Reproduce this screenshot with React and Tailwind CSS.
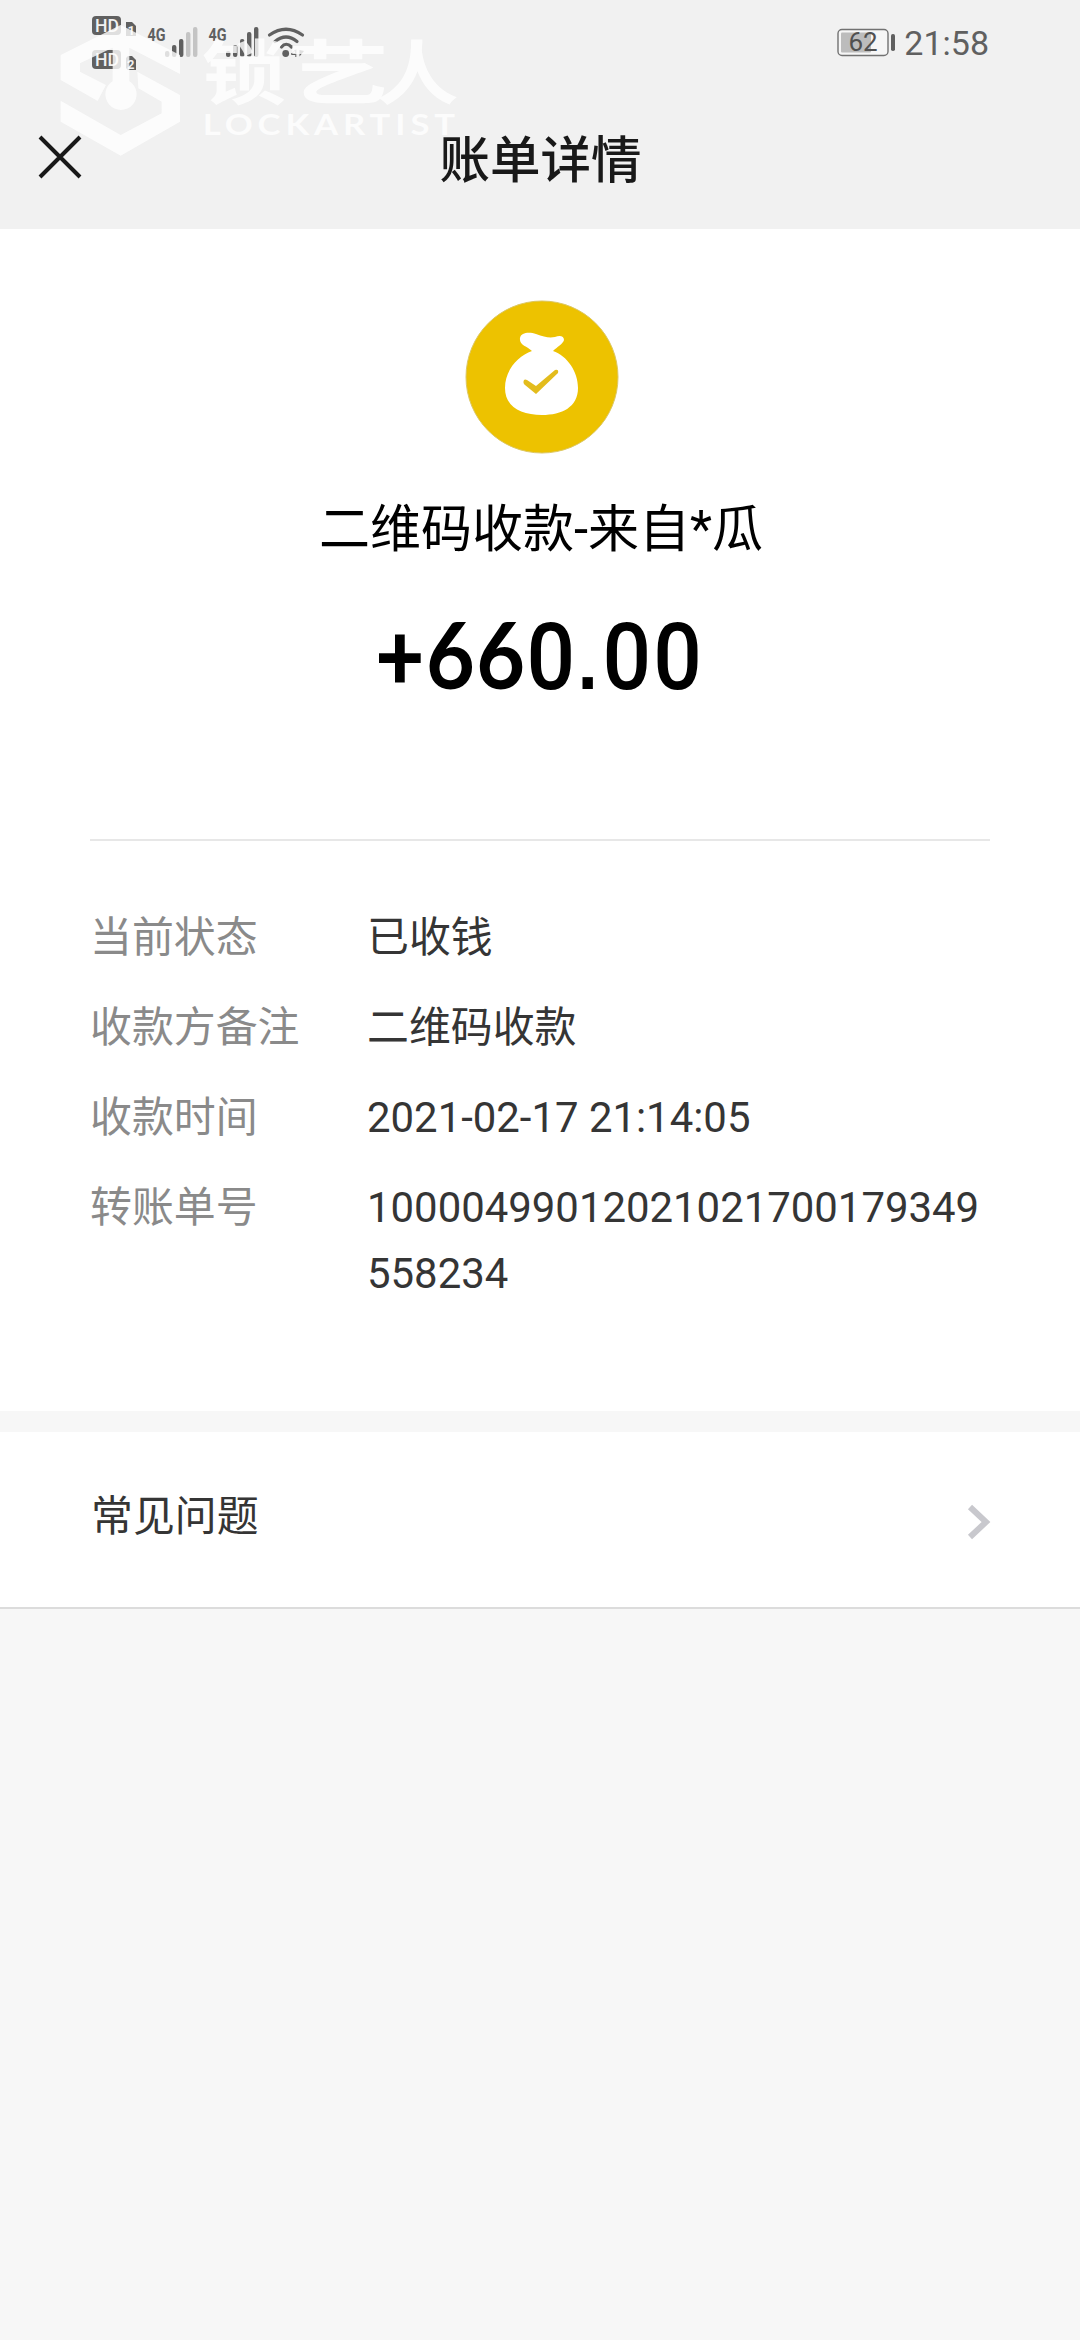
import React from 'react';

const details = [
  { label: '当前状态', value: '已收钱' },
  { label: '收款方备注', value: '二维码收款' },
  { label: '收款时间', value: '2021-02-17 21:14:05' },
  { label: '转账单号', value: '10000499012021021700179349558234' },
];

const HdBadges = () => (
  <svg width="52" height="84" viewBox="90 0 52 84" fill="#606060">
    <rect x="92" y="16" width="29" height="19" rx="4" />
    <rect x="92" y="50" width="29" height="19" rx="4" />
    <path d="M126 22h6l4 4v10h-10z" />
    <path d="M128 56h4l4 4v10h-8l-2-2v-10z" />
    <g fill="#f1f1f1" fontFamily="Roboto, sans-serif" fontWeight="500">
      <text x="95" y="32" fontSize="18" textLength="24" lengthAdjust="spacingAndGlyphs">HD</text>
      <text x="95" y="66" fontSize="18" textLength="24" lengthAdjust="spacingAndGlyphs">HD</text>
      <text x="127.5" y="35" fontSize="13" fontWeight="700">1</text>
      <text x="127" y="69" fontSize="13" fontWeight="700">2</text>
    </g>
  </svg>
);

const Signal = ({ level }) => (
  <svg width="52" height="84" viewBox="147 0 52 84" fill="#606060">
    <text
      x="147.5"
      y="41"
      fontSize="19"
      fontWeight="700"
      fontFamily="Roboto, sans-serif"
      textLength="18"
      lengthAdjust="spacingAndGlyphs"
    >
      4G
    </text>
    {[6, 12, 18, 25, 30].map((h, i) => (
      <rect
        key={h}
        x={165 + i * 7}
        y={57 - h}
        width="4.4"
        height={h}
        rx="2"
        fill={i < level ? '#606060' : '#c4c4c4'}
      />
    ))}
  </svg>
);

const Wifi = () => (
  <svg width="40" height="84" viewBox="266 0 40 84" fill="none" stroke="#606060" strokeWidth="3.2" strokeLinecap="round">
    <path d="M269.5 35Q286 23.500 302.500 35" />
    <path d="M275 41.500Q286 32.500 297 41.500" />
    <path d="M281.500 47Q286 41.500 291.500 47" />
    <circle cx="285.700" cy="53.500" r="3.400" fill="#606060" stroke="none" />
    <path d="M291.500 54l3.800-4.500V57h1v-7.500M299.500 50v6.500l4.500-5.500z" fill="#606060" stroke="none" />
    <path d="M292 54h3" strokeWidth="2" />
  </svg>
);

const Battery = () => (
  <svg width="60" height="84" viewBox="836 0 60 84">
    <rect x="838" y="29.500" width="50" height="26" rx="4" fill="#f6f6f6" stroke="#727272" strokeWidth="1.400" />
    <rect x="841" y="32.500" width="30" height="20" rx="1" fill="#bcbcbc" />
    <rect x="891" y="34" width="4" height="17" rx="1.800" fill="#606060" />
    <text x="863" y="51.300" fontSize="26" textAnchor="middle" fill="#505050" fontFamily="Roboto, sans-serif">62</text>
  </svg>
);

// translucent brand mark laid over the top bar
const Watermark = () => (
  <svg className="pointer-events-none absolute left-0 top-0" width="500" height="160" viewBox="0 0 1500 480">
    <g fill="#fff" opacity="0.8">
      <path
        d="M182 165L362 75L540 165V222L388 143V243A47 47 0 1 1 338 243V143L240 190V215L318 255L293 303L182 240Z
           M182 302L362 405L485 340V305L415 265L412 215L540 285V365L362 467L182 365Z"
      />
      <g fontFamily="'Noto Sans CJK SC', sans-serif" fontWeight="700" fontSize="210">
        <text x="605" y="298" textLength="252" lengthAdjust="spacingAndGlyphs">锁</text>
        <text x="862" y="298" textLength="305" lengthAdjust="spacingAndGlyphs">艺</text>
        <text x="1130" y="298" textLength="245" lengthAdjust="spacingAndGlyphs">人</text>
      </g>
      <text
        x="608"
        y="404"
        fontFamily="Lato, sans-serif"
        fontWeight="700"
        fontSize="86"
        letterSpacing="12"
        textLength="772"
        lengthAdjust="spacingAndGlyphs"
      >
        LOCKARTIST
      </text>
    </g>
  </svg>
);

const MoneyBag = () => (
  <svg className="ml-[3px]" width="154" height="154" viewBox="0 0 154 154">
    <circle cx="77" cy="77" r="76" fill="#edc200" stroke="#dcc763" strokeWidth="1" />
    <path
      d="M55 38C56 32 65 32 71 34C79 37 84 38 90 37C95 35 99 36 99 40C98 44 92 47 88 51C102 56 113 71 113 88C113 107 97 115 77 115C56 115 40 107 40 88C40 70 53 56 67 51C62 46 54 45 55 38Z"
      fill="#fff"
    />
    <path d="M59 80Q57.500 83 60 85L71 94L93 73Q94 69 90 70L71 86L62 80Q60 79 59 80Z" fill="#e3bc1c" />
  </svg>
);

export default function App() {
  return (
    <div className="flex h-[2340px] w-[1080px] flex-col overflow-hidden bg-[#f7f7f7] font-[Roboto,'Noto_Sans_CJK_SC',sans-serif]">
      {/* Status bar + title */}
      <header className="relative h-[229px] bg-[#f1f1f1]">
        <div className="flex h-[84px] items-center justify-between pl-[90px] pr-[91px]">
          <div className="flex">
            <HdBadges />
            <div className="ml-[5px] flex gap-[9px]">
              <Signal level={3} />
              <Signal level={5} />
            </div>
            <div className="ml-[6px]">
              <Wifi />
            </div>
          </div>
          <div className="flex items-center gap-[8px]">
            <Battery />
            <span className="pt-[2px] text-[34px] leading-none text-[#606060]">21:58</span>
          </div>
        </div>
        <div className="flex h-[145px] items-center px-[38px]">
          <button type="button">
            <svg width="44" height="44" viewBox="0 0 44 44" stroke="#191919" strokeWidth="4">
              <path d="M2 2L42 42M42 2L2 42" />
            </svg>
          </button>
          <h1 className="mr-[43px] flex-1 pt-[8px] text-center text-[50.5px] font-medium leading-[72px] text-[#191919]">
            账单详情
          </h1>
        </div>
        <Watermark />
      </header>

      {/* Bill summary */}
      <main className="h-[1182px] bg-white px-[90px] pt-[71px]">
        <div className="flex flex-col items-center">
          <MoneyBag />
          <p className="ml-[2px] mt-[40px] text-[51px] leading-[72px] text-black">二维码收款-来自*瓜</p>
          <p className="mt-[33px] h-[110px] scale-x-92 whitespace-nowrap text-[93px] font-medium leading-[110px] tracking-[2.4px] text-black">
            +<span className="font-[Lato] text-[91.5px] font-bold tracking-[1.6px]">66</span>0
            <span className="font-['Liberation_Sans'] text-[80px] font-bold tracking-[5px]">.</span>00
          </p>
        </div>

        <div className="mt-[130px] border-t-2 border-[#e7e7e7] pt-[64px]">
          <dl className="flex flex-col gap-[24px] text-[41.9px] leading-[66px]">
            {details.map((row) => (
              <div key={row.label} className="flex">
                <dt className="w-[277px] shrink-0 text-[#8a8a8a]">{row.label}</dt>
                <dd className="w-[623px] break-all text-[#353535]">{row.value}</dd>
              </div>
            ))}
          </dl>
        </div>
      </main>

      {/* FAQ entry */}
      <section className="mt-[21px] flex h-[177px] items-center justify-between border-b-2 border-[#dcdcdc] bg-white pl-[91px] pr-[89px]">
        <span className="pb-[5px] text-[41.9px] leading-[66px] text-[#353535]">常见问题</span>
        <svg className="mt-[4px]" width="24" height="36" viewBox="0 0 24 36" fill="none" stroke="#c8c8cd" strokeWidth="6">
          <path d="M3 3L19 18L3 33" />
        </svg>
      </section>
    </div>
  );
}
